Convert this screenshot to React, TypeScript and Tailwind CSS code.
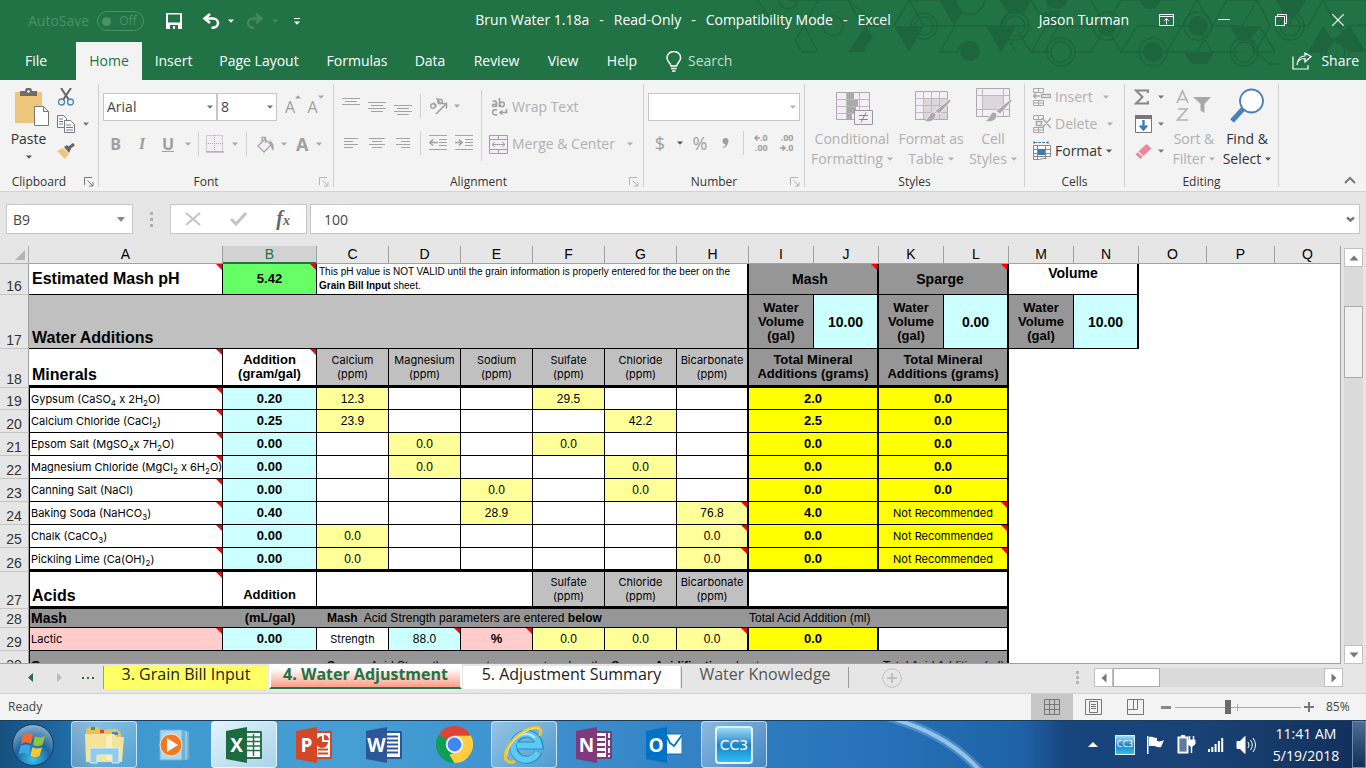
import type { ReactNode } from "react";
import clsx from "clsx";
import { twMerge } from "tailwind-merge";

/* ---------- small shared pieces ---------- */

const Caret = ({ className = "text-[#a8a8a8]" }: { className?: string }) => (
  <svg width="6" height="4" viewBox="0 0 6 4" className={clsx("shrink-0", className)}>
    <path d="M0 0.5h6L3 3.8z" fill="currentColor" />
  </svg>
);

const Launcher = ({ className }: { className: string }) => (
  <button aria-label="More options" className={clsx("absolute", className)}>
    <svg width="10" height="10" viewBox="0 0 10 10" fill="none" stroke="currentColor">
      <path d="M0.5 8V0.5H8M3.5 3.5l5 5M9 5v4H5" />
    </svg>
  </button>
);

const VLine = ({ className = "h-6" }: { className?: string }) => (
  <span className={clsx("w-px shrink-0 bg-[#d0d0d0]", className)} />
);

const IconButton = ({ label, className, children }: { label: string; className?: string; children: ReactNode }) => (
  <button aria-label={label} className={clsx("flex shrink-0 items-center justify-center", className)}>
    {children}
  </button>
);

/* ---------- title bar ---------- */

const TitlePattern = () => (
  <svg className="absolute right-0 top-0" width="620" height="68" viewBox="746 0 620 68" fill="none" stroke="#1d653d" strokeWidth="1.4">
    <path d="M758 0l16 26M788 0h60l30 26h-16M818 0l-14 26-9 14 7 12h16l-13-25M848 0l14 26M894 26l15-26 15 26M909 0h52M925 26l30 0-15-26M955 26l-15 26h17l5-9M955 26h46l15-26M955 26l-15-26M1001 26l15 26M1031 26h-40M1031 0l15 26-14 26h20M1046 26h60l15 26h30M1031 52l-14-22" />
    <path d="M1046 0l12 26-13 26M1075 52h16l15-26 15-26h54M1091 0l15 26M1121 52l16-26h60l15 26h30M1167 52l15-26M1152 52l15 0M1182 26l15-26 15 26-15 26h-30M1212 26l15-26h30l-15 26h-30M1242 26l15 26h18M1257 0l13 26-15 26 15 12h10M1288 26h20l15-26h43M1303 0l-15 26M1323 0l14 26 29-1M1275 52l-15-26M1308 52h20M1337 26l29 26" />
    <g fill="#1d653d" stroke="none">
      <path d="M866 26l7 12-6 6-3 8h-16zM894 26h30l-15 26zM986 26h30l-15 26zM940 0h16l8 10-9 14zM1000 0h31l-8 14h-15zM1230 26h31l-12 15h-10zM1184 52h30l-7 12h-16zM1276 0h30l-9 15h-12zM1323 26l-15 26h18l8-10zM1350 26l-16 13 16 13h16zM1046 26l-8-12 20-4 4 10z" />
      <circle cx="970" cy="51" r="10" />
      <circle cx="1153" cy="52" r="10" />
      <circle cx="1198" cy="26" r="10" />
      <circle cx="1107" cy="27" r="9" />
      <path d="M1047 0a10 9 0 0 0 20 0zM1140 0a10 9 0 0 0 20 0z" />
    </g>
    <circle cx="788" cy="0" r="9" />
    <circle cx="833" cy="26" r="10" />
    <circle cx="924" cy="26" r="9" />
    <circle cx="924" cy="26" r="13" />
    <circle cx="970" cy="0" r="14" fill="#217346" />
    <circle cx="1015" cy="26" r="10" />
    <circle cx="1015" cy="26" r="14" />
    <circle cx="1061" cy="52" r="10" />
    <circle cx="1061" cy="52" r="14" />
    <circle cx="1198" cy="26" r="14" />
    <circle cx="1107" cy="26" r="14" />
    <circle cx="1153" cy="52" r="14" />
    <circle cx="1244" cy="52" r="10" />
    <circle cx="1244" cy="52" r="14" />
    <circle cx="1290" cy="26" r="10" />
    <circle cx="1290" cy="26" r="14" />
    <circle cx="1335" cy="52" r="10" />
    <circle cx="1335" cy="52" r="14" />
  </svg>
);

const TitleBar = () => (
  <div className="relative flex h-[42px] items-center text-sm text-white">
    <div className="flex flex-1 items-center px-[22px]">
      <span className="ml-[6px] text-[#4c9168]">AutoSave</span>
      <button className="ml-2 flex h-5 w-[47px] items-center rounded-full border border-[#4c9168] pl-1 text-xs text-[#4c9168]">
        <span className="h-[9px] w-[9px] rounded-full bg-[#4c9168]" />
        <span className="ml-2">Off</span>
      </button>
      <IconButton label="Save" className="ml-[22px]">
        <svg width="16" height="16" viewBox="0 0 16 16">
          <path d="M0 0h16v16H0z" fill="#fff" />
          <path d="M2 1.5h12v8H2zM4 12h8v4H4z" fill="#217346" />
          <path d="M7 13h2v3H7z" fill="#fff" />
        </svg>
      </IconButton>
      <IconButton label="Undo" className="ml-5 gap-2">
        <svg width="18" height="16" viewBox="0 0 18 16" fill="none" stroke="#fff" strokeWidth="2.6">
          <path d="M8 1L2.5 5.5 8 10M3 5.5h8a5 4.6 0 0 1 0 9.2H9.5" />
        </svg>
        <Caret className="text-white" />
      </IconButton>
      <IconButton label="Redo" className="ml-3 gap-2">
        <svg width="18" height="16" viewBox="0 0 18 16" fill="none" stroke="#43895f" strokeWidth="2.4">
          <path d="M10 1l5.5 4.5L10 10M15 5.5H7a5 4.6 0 0 0 0 9.2h1" />
        </svg>
        <Caret className="text-[#43895f]" />
      </IconButton>
      <IconButton label="Customize Quick Access Toolbar" className="ml-4 flex-col gap-[2px]">
        <span className="h-px w-[6px] bg-white" />
        <Caret className="text-white" />
      </IconButton>
    </div>
    <h1 className="relative z-10 flex gap-[10px] pb-[2px]">
      <span>Brun Water 1.18a</span>
      <span>-</span>
      <span>Read-Only</span>
      <span>-</span>
      <span>Compatibility Mode</span>
      <span>-</span>
      <span>Excel</span>
    </h1>
    <div className="relative z-10 flex flex-1 items-center justify-end px-[22px] pb-[3px]">
      <span>Jason Turman</span>
      <IconButton label="Ribbon Display Options" className="ml-[30px]">
        <svg width="15" height="12" viewBox="0 0 15 12" fill="none" stroke="#fff">
          <path d="M0.5 0.5h14v11H0.5zM0.5 2.5h14M7.5 10.5v-6M5 7l2.5-2.5L10 7" />
        </svg>
      </IconButton>
      <IconButton label="Minimize" className="ml-[44px]">
        <svg width="12" height="12" viewBox="0 0 12 12" stroke="#fff">
          <path d="M0 5.5h12" />
        </svg>
      </IconButton>
      <IconButton label="Restore" className="ml-[45px]">
        <svg width="12" height="12" viewBox="0 0 12 12" fill="none" stroke="#fff">
          <path d="M0.5 2.5h9v9h-9zM2.5 2.5v-2h9v9h-2" />
        </svg>
      </IconButton>
      <IconButton label="Close" className="ml-[45px]">
        <svg width="12" height="12" viewBox="0 0 12 12" stroke="#fff" strokeWidth="1.2">
          <path d="M0 0l12 12M12 0L0 12" />
        </svg>
      </IconButton>
    </div>
  </div>
);

const menuTabs = [
  { label: "File", className: "w-[76px] pr-1" },
  { label: "Home", className: "w-[66px] bg-[#f3f3f3] text-[#217346]" },
  { label: "Insert", className: "w-[63px]" },
  { label: "Page Layout", className: "w-[108px]" },
  { label: "Formulas", className: "w-[88px]" },
  { label: "Data", className: "w-[58px]" },
  { label: "Review", className: "w-[75px]" },
  { label: "View", className: "w-[58px]" },
  { label: "Help", className: "w-[60px]" },
];

const MenuBar = () => (
  <nav className="relative flex h-[38px] items-stretch text-sm text-white">
    {menuTabs.map((tab) => (
      <button key={tab.label} className={clsx("shrink-0 text-center", tab.className)}>
        {tab.label}
      </button>
    ))}
    <button className="ml-[14px] flex items-center gap-[6px] text-[#c5dccf]">
      <svg width="16" height="21" viewBox="0 0 16 21" fill="none" stroke="#fff" strokeWidth="1.5">
        <path d="M5 15c0-3-4-4-4-8.3a6.7 6.2 0 0 1 13.6 0c0 4.3-4 5.3-4 8.3zM5 17.5h5.600M6 20h3.6" />
      </svg>
      Search
    </button>
    <button className="ml-auto flex items-center gap-2 pr-[7px]">
      <svg width="21" height="18" viewBox="0 0 21 18" fill="none" stroke="#fff" strokeWidth="1.2">
        <path d="M1 4.5v12.5h15v-4M5 13c.5-4 3-6.5 8-6.5V10l6-5.500L13 1v3C8 4 5.5 8 5 13z" />
      </svg>
      Share
    </button>
  </nav>
);

/* ---------- ribbon ---------- */

const Group = ({ label, className, children, launcher }: { label: string; className: string; children: ReactNode; launcher?: ReactNode }) => (
  <section className="flex shrink-0">
    <div className={clsx("flex flex-col", className)}>
      <div className="h-[92px]">{children}</div>
      <div className={clsx("relative flex h-[19px] items-center justify-center text-xs text-[#333]", launcher && "pr-5")}>
        {label}
        {launcher}
      </div>
    </div>
    <VLine className="mt-1 h-[103px]" />
  </section>
);

const Clipboard = () => (
  <Group label="Clipboard" className="w-[98px]" launcher={<Launcher className="right-1 text-[#777]" />}>
    <div className="flex pt-2">
      <button className="flex w-[57px] flex-col items-center text-sm leading-5 text-[#333]">
        <svg width="34" height="38" viewBox="0 0 34 38" className="ml-[6px]">
          <path d="M0 4h27v31H0z" fill="#ecc67b" />
          <path d="M5 3h5a3.5 3.5 0 0 1 7 0h5v5H5z" fill="#6d6d6d" />
          <circle cx="13.5" cy="3.5" r="1.3" fill="#f3f3f3" />
          <path d="M19.5 18.5h9l5 5v14h-14z" fill="#fff" stroke="#777" />
          <path d="M28.5 18.5v5h5" fill="none" stroke="#777" />
        </svg>
        <span className="mt-[3px]">Paste</span>
        <span className="flex h-4 items-center"><Caret className="text-[#555]" /></span>
      </button>
      <div className="flex flex-col gap-[9px]">
        <IconButton label="Cut" className="h-[18px] w-[18px]">
          <svg width="16" height="18" viewBox="0 0 16 18" fill="none">
            <path d="M3 0l8 12M13 0L5 12" stroke="#666" strokeWidth="2" />
            <circle cx="3.5" cy="14" r="3" stroke="#4a80b5" strokeWidth="1.3" />
            <circle cx="12.5" cy="14" r="3" stroke="#4a80b5" strokeWidth="1.3" />
          </svg>
        </IconButton>
        <IconButton label="Copy" className="h-[18px] gap-2">
          <svg width="18" height="18" viewBox="0 0 18 18" fill="#fff" stroke="#777">
            <path d="M0.5 0.5h6l3 3v9h-9z" />
            <path d="M2 4h4M2 6.5h4M2 9h4" stroke="#4a80b5" />
            <path d="M7.5 5.5h6l4 4v8h-10z" />
            <path d="M9 10h5M9 12.5h7M9 15h7" stroke="#4a80b5" />
          </svg>
          <Caret className="text-[#777]" />
        </IconButton>
        <IconButton label="Format Painter" className="h-[18px] w-[18px]">
          <svg width="18" height="16" viewBox="0 0 18 16">
            <path d="M0 8l6-3 6 6-4 5z" fill="#ecc67b" />
            <path d="M7 4l3-2 4 4-2 4z" fill="#666" />
            <path d="M12 5l5-4" stroke="#666" strokeWidth="3" />
          </svg>
        </IconButton>
      </div>
    </div>
  </Group>
);

const Combo = ({ label, value, className, caret }: { label: string; value: string; className: string; caret?: string }) => (
  <div className={clsx("relative flex shrink-0 items-center", className)}>
    <select aria-label={label} className="h-7 w-full appearance-none border border-[#c6c6c6] bg-white pl-[3px] text-sm text-[#444] outline-none">
      <option>{value}</option>
    </select>
    <Caret className={clsx("pointer-events-none absolute right-1", caret ?? "text-[#777]")} />
  </div>
);

const FontGroup = () => (
  <Group label="Font" className="w-[234px] px-1" launcher={<Launcher className="right-0 text-[#b5b5b5]" />}>
    <div className="flex items-center pt-[13px]">
      <Combo label="Font" value="Arial" className="w-[114px]" />
      <Combo label="Font size" value="8" className="w-[60px]" />
      <button aria-label="Increase font size" className="ml-2 flex w-6 text-base text-[#a0a0a0]">A<Caret className="rotate-180" /></button>
      <button aria-label="Decrease font size" className="ml-px flex w-6 text-base text-[#a0a0a0]">A<Caret /></button>
    </div>
    <div className="flex items-center pt-[11px] font-bold text-[#a0a0a0]">
      <IconButton label="Bold" className="w-[25px]">B</IconButton>
      <IconButton label="Italic" className="w-[28px] font-serif italic">I</IconButton>
      <IconButton label="Underline" className="w-6 underline">U</IconButton>
      <IconButton label="Underline styles" className="w-[15px]"><Caret /></IconButton>
      <VLine className="mx-[3px] h-6" />
      <IconButton label="Borders" className="ml-1 gap-2">
        <svg width="18" height="18" viewBox="0 0 18 18" fill="#f6eef6" stroke="#aaa" strokeDasharray="1 1">
          <path d="M0.5 0.5h16v16h-16zM8.5 0v16M0 8.5h17" />
          <path d="M0 17h18" strokeDasharray="none" stroke="#999" />
        </svg>
        <Caret />
      </IconButton>
      <VLine className="ml-2 h-6" />
      <IconButton label="Fill Color" className="ml-[10px] gap-[7px]">
        <svg width="17" height="17" viewBox="0 0 17 17" fill="#f6eef6" stroke="#a8a8a8" strokeWidth="1.3">
          <path d="M1 10l7-7 6 6-7 7zM5 7V1.500h3.5V7" />
          <path d="M13 5l3 4v5l-2-5z" fill="#a0a0a0" />
        </svg>
        <Caret />
      </IconButton>
      <IconButton label="Font Color" className="ml-[9px] gap-2 text-lg leading-6">A<Caret /></IconButton>
    </div>
  </Group>
);

/* Horizontal strokes for the paragraph and alignment buttons: [x, y, width] */
const Lines = ({ lines }: { lines: number[][] }) => (
  <svg width="18" height="18" viewBox="0 0 18 18" fill="#a3a3a3">
    {lines.map(([x, y, w]) => (
      <rect key={`${x}-${y}`} x={x} y={y} width={w} height="1" />
    ))}
  </svg>
);

const verticalAlign = [
  { label: "Top Align", lines: [[0, 1, 18], [3, 4, 12], [0, 7, 18]] },
  { label: "Middle Align", lines: [[0, 5, 18], [3, 8, 12], [0, 11, 18], [3, 14, 12]] },
  { label: "Bottom Align", lines: [[0, 8, 18], [3, 11, 12], [0, 14, 18], [3, 17, 12]] },
];

const horizontalAlign = [
  { label: "Align Left", lines: [[2, 4, 14], [2, 7, 9], [2, 10, 14], [2, 13, 9]] },
  { label: "Center", lines: [[1, 4, 16], [4, 7, 10], [1, 10, 16], [4, 13, 10]] },
  { label: "Align Right", lines: [[2, 4, 14], [7, 7, 9], [2, 10, 14], [7, 13, 9]] },
];

const Indent = ({ flip }: { flip?: boolean }) => (
  <svg width="18" height="18" viewBox="0 0 18 18" fill="none" stroke="#a3a3a3">
    <path d="M0 1.5h18M10 5.5h8M10 8.5h8M10 11.5h8M0 15.5h18" />
    <path d={flip ? "M0 8.5h7M4 5.5l3 3-3 3" : "M1 8.5h8M4 5.5l-3 3 3 3"} strokeWidth="1.7" />
  </svg>
);

const AlignmentGroup = () => (
  <Group label="Alignment" className="w-[309px]" launcher={<Launcher className="right-1 text-[#b5b5b5]" />}>
    <div className="flex pt-[10px]">
      <div className="flex flex-col gap-[19px] pl-2 pt-[7px]">
        <div className="flex items-center gap-2">
          {verticalAlign.map((a) => (
            <IconButton key={a.label} label={a.label}><Lines lines={a.lines} /></IconButton>
          ))}
          <VLine className="-my-1 h-6" />
          <IconButton label="Orientation" className="gap-[5px]">
            <svg width="20" height="18" viewBox="0 0 20 18" fill="none" stroke="#a0a0a0" strokeWidth="1.4">
              <circle cx="4" cy="9" r="2.3" />
              <path d="M4.5 5.500l3 4M7.500 1l4.500 6" />
              <circle cx="11" cy="4.500" r="2.300" />
              <path d="M7 17L17 7M12.500 6.500h5V11.500" strokeWidth="1.6" />
            </svg>
            <Caret />
          </IconButton>
        </div>
        <div className="flex items-center gap-2">
          {horizontalAlign.map((a) => (
            <IconButton key={a.label} label={a.label}><Lines lines={a.lines} /></IconButton>
          ))}
          <VLine className="-my-1 h-6" />
          <IconButton label="Decrease Indent"><Indent /></IconButton>
          <IconButton label="Increase Indent"><Indent flip /></IconButton>
        </div>
      </div>
      <VLine className="ml-2 h-[71px]" />
      <div className="flex flex-col gap-[17px] pl-[7px] pt-[7px] text-sm text-[#b0b0b0]">
        <button className="flex h-5 items-center gap-1">
          <svg width="19" height="18" viewBox="0 0 19 18" fill="none" stroke="#a0a0a0" strokeWidth="1.600">
            <path d="M3.500 3.500c2-1 4-.5 4 1.500v4M7.500 6C5 6 3.500 6.300 3.500 7.500s2.500 1.500 4 0M10.500 0v9" />
            <circle cx="13" cy="6.300" r="2.300" />
            <path d="M8 12c-2-1-4.500 0-4.500 2.300S6 17.500 8 16.500M17.500 11v3.500h-6M13.500 12.500l-2.500 2 2.500 2" />
          </svg>
          Wrap Text
        </button>
        <button className="flex h-5 items-center gap-1">
          <svg width="19" height="19" viewBox="0 0 19 19" fill="#f6eef6" stroke="#a0a0a0">
            <path d="M0.5 0.5h18v18h-18zM0.5 4.5h18M0.5 14.5h18M9.5 0v4M9.5 15v4M3 9.5h13M6 7L3 9.5 6 12M13 7l3 2.5-3 2.5" />
          </svg>
          Merge &amp; Center
          <Caret className="ml-2" />
        </button>
      </div>
    </div>
  </Group>
);

const NumberGroup = () => (
  <Group label="Number" className="w-40 px-1" launcher={<Launcher className="right-0 text-[#b5b5b5]" />}>
    <div className="pt-[13px]"><Combo label="Number format" value=" " className="w-[152px]" caret="text-[#b5b5b5]" /></div>
    <div className="flex items-center pt-[10px] text-lg leading-6 text-[#a0a0a0]">
      <IconButton label="Accounting format" className="h-6 w-6">$</IconButton>
      <IconButton label="Currency list" className="h-6 w-4"><Caret className="text-[#555]" /></IconButton>
      <IconButton label="Percent Style" className="h-6 w-6">%</IconButton>
      <IconButton label="Comma Style" className="h-6 w-[26px]">
        <svg width="7" height="10" viewBox="0 0 7 10" fill="currentColor"><path d="M3.500 0C6 0 7 1.800 6.300 4.500 5.700 7 4 9 1.500 10l-.5-1c1.500-.8 2.300-1.800 2.500-3C1.500 6.200.5 5 .5 3S1.800 0 3.500 0z" /></svg>
      </IconButton>
      <VLine className="ml-[5px] h-6" />
      <button aria-label="Increase Decimal" className="ml-[10px] flex flex-col items-end text-[9px] font-bold leading-[10px]">
        <span className="flex items-center">
          <svg width="6" height="6" viewBox="0 0 6 6" fill="none" stroke="currentColor" strokeWidth="1.500"><path d="M6 3H1M3.500 0.500L1 3l2.500 2.500" /></svg>
          .0
        </span>
        <span>.00</span>
      </button>
      <button aria-label="Decrease Decimal" className="ml-3 flex flex-col items-end text-[9px] font-bold leading-[10px]">
        <span>.00</span>
        <span className="flex items-center">
          <svg width="6" height="6" viewBox="0 0 6 6" fill="none" stroke="currentColor" strokeWidth="1.500"><path d="M0 3h5M2.500 0.500L5 3 2.500 5.500" /></svg>
          .0
        </span>
      </button>
    </div>
  </Group>
);

const Brush = () => (
  <path d="M37 13l-12 13-4-3L36 11zM22 26l-3-2c-4 0-3 6-9 9 5 2 12 0 12-7z" fill="#aaa" stroke="#f3f3f3" strokeWidth="0.8" />
);

const BigButton = ({ top, bottom, className, children, caret }: { top: string; bottom: string; className: string; children: ReactNode; caret?: string }) => (
  <button className={clsx("flex shrink-0 flex-col items-center text-sm leading-5", className)}>
    {children}
    <span className="mt-[3px]">{top}</span>
    <span className="flex items-center gap-1">{bottom}<Caret className={caret ?? "text-[#b0b0b0]"} /></span>
  </button>
);

const StylesGroup = () => (
  <Group label="Styles" className="w-[219px]">
    <div className="flex pl-1 pt-2 text-[#b0b0b0]">
      <BigButton top="Conditional" bottom="Formatting" className="w-[86px]">
        <svg width="38" height="38" viewBox="0 0 38 38" className="ml-1">
          <path d="M1.5 4.5h33v27h-33z" fill="#f6eef6" stroke="#aaa" />
          <path d="M12 5h7v6h-7zM12 11h11v7H12zM12 18h9v7h-9zM12 25h5v6h-5z" fill="#aaa" />
          <path d="M1 11.5h33M1 18.5h33M1 25.5h33M11.5 5v26M24.5 5v26" stroke="#bbb" />
          <path d="M19.5 22.5h18v14h-18z" fill="#f6eef6" stroke="#999" />
          <path d="M24 27.5h9M24 31.5h9M31 24.5l-5 10" stroke="#888" />
        </svg>
      </BigButton>
      <BigButton top="Format as" bottom="Table" className="w-[72px]">
        <svg width="38" height="38" viewBox="0 0 38 38" className="ml-1">
          <path d="M1.5 3.5h32v28h-32z" fill="#f6eef6" stroke="#aaa" />
          <path d="M9 11h24v20H9z" fill="#ddd6dd" />
          <path d="M1 10.5h33M1 17.5h33M1 24.5h33M9.5 3v28M17.5 3v28M25.5 3v28" stroke="#bbb" />
          <Brush />
        </svg>
      </BigButton>
      <BigButton top="Cell" bottom="Styles" className="w-[52px]">
        <svg width="40" height="38" viewBox="0 0 40 38" className="ml-1">
          <path d="M1.5 0.5h33v28h-33z" fill="#f6eef6" stroke="#aaa" />
          <path d="M8 8h20v13H8z" fill="#ddd6dd" />
          <path d="M1 7.5h33M1 21.5h33M7.5 0v28M28.5 0v28" stroke="#bbb" />
          <Brush />
        </svg>
      </BigButton>
    </div>
  </Group>
);

const RowsIcon = ({ extra }: { extra: ReactNode }) => (
  <svg width="18" height="18" viewBox="0 0 18 18" fill="none" stroke="#a8a8a8">
    <path d="M0.5 0.5h10v4h-10zM0.5 12.5h10v5h-10zM5.5 0v4M5.5 12v6M0 15h10" />
    {extra}
  </svg>
);

const CellsGroup = () => (
  <Group label="Cells" className="w-[99px]">
    <div className="flex flex-col gap-[9px] pl-2 pt-2 text-sm leading-[18px] text-[#b0b0b0]">
      <button className="flex h-[18px] items-center gap-1">
        <RowsIcon extra={<path d="M8.5 6.5h9v3h-9zM0 8h7M3 5.5L0.5 8 3 10.5" strokeWidth="1.4" />} />
        Insert<Caret className="ml-[6px]" />
      </button>
      <button className="flex h-[18px] items-center gap-1">
        <RowsIcon extra={<path d="M3.5 6.5h5v4h-5zM9 3l9 10M18 3L9 13" strokeWidth="1.5" />} />
        Delete<Caret className="ml-[6px]" />
      </button>
      <button className="flex h-[18px] items-center gap-1 text-[#333]">
        <svg width="18" height="20" viewBox="0 0 18 20" fill="#fff" stroke="#888">
          <path d="M0.5 4.5h17v11h-17zM0.5 15.5v3h6l3-1h4M0 8.5h17M0 12.5h17M4.5 5v13M12.5 5v13" />
          <path d="M5 8h7v6H5z" fill="#3d7ab8" stroke="none" />
          <path d="M1 1.5h14M1 0v3M15 0v3" stroke="#3d7ab8" strokeDasharray="3 1" />
        </svg>
        Format<Caret className="text-[#555]" />
      </button>
    </div>
  </Group>
);

const EditingGroup = () => (
  <Group label="Editing" className="w-[153px]">
    <div className="flex pl-2 pt-2 text-[#b0b0b0]">
      <div className="flex w-8 flex-col gap-[9px]">
        <IconButton label="AutoSum" className="h-[18px] gap-2">
          <svg width="16" height="16" viewBox="0 0 16 16" fill="none" stroke="#888" strokeWidth="2"><path d="M14 4V1.500H2L8.500 8 2 14.500h12V12" /></svg>
          <Caret className="text-[#777]" />
        </IconButton>
        <IconButton label="Fill" className="h-[18px] gap-[6px]">
          <svg width="17" height="18" viewBox="0 0 17 18">
            <path d="M0.5 0.5h16v17h-16z" fill="#fff" stroke="#777" />
            <path d="M0 0h17v4H0z" fill="#777" />
            <path d="M8.5 5v9M5 10.5l3.5 4 3.5-4" fill="none" stroke="#3d7ab8" strokeWidth="2.4" />
          </svg>
          <Caret className="text-[#777]" />
        </IconButton>
        <IconButton label="Clear" className="h-[18px] gap-[6px]">
          <svg width="17" height="17" viewBox="0 0 17 17"><path d="M11.500 1l5 4.500-8 7.500-5-4.500z" fill="#e8899c" /><path d="M2.700 9.300l5 4.500L5.500 16l-5-4.500z" fill="#e8899c" /></svg>
          <Caret className="text-[#777]" />
        </IconButton>
      </div>
      <BigButton top="Sort &amp;" bottom="Filter" className="ml-1 w-[50px]">
        <svg width="38" height="38" viewBox="0 0 38 38" fill="none" stroke="#b3b3b3" strokeWidth="1.7">
          <path d="M2 15L7.5 3 13 15M4 11.5h7M3 21h9L2.5 32H13" />
          <path d="M18 9h18l-6.5 7v9l-4-2.5V16z" fill="#a8a8a8" stroke="none" />
        </svg>
      </BigButton>
      <BigButton top="Find &amp;" bottom="Select" className="w-[56px] text-[#333]" caret="text-[#555]">
        <svg width="36" height="38" viewBox="0 0 36 38">
          <path d="M14 21L3 33" stroke="#4a80ba" strokeWidth="5" />
          <circle cx="22.5" cy="13" r="11.5" fill="#fff" stroke="#4a80ba" strokeWidth="1.8" />
        </svg>
      </BigButton>
    </div>
  </Group>
);

const Ribbon = () => (
  <div className="relative flex h-28 shrink-0 border-b border-[#d2d2d2] bg-[#f3f3f3]">
    <Clipboard />
    <FontGroup />
    <AlignmentGroup />
    <NumberGroup />
    <StylesGroup />
    <CellsGroup />
    <EditingGroup />
    <button aria-label="Collapse the Ribbon" className="mb-[7px] ml-auto mr-[10px] self-end">
      <svg width="12" height="8" viewBox="0 0 12 8" fill="none" stroke="#777" strokeWidth="2"><path d="M1 7l5-5 5 5" /></svg>
    </button>
  </div>
);

/* ---------- formula bar ---------- */

const FormulaBar = () => (
  <div className="flex h-[54px] shrink-0 items-start px-[6px] pt-3 text-sm text-[#444]">
    <div className="relative flex w-[127px] items-center">
      <input aria-label="Name Box" defaultValue="B9" className="h-[30px] w-full border border-[#c6c6c6] bg-white pl-[6px] outline-none" />
      <svg width="8" height="5" viewBox="0 0 8 5" className="pointer-events-none absolute right-2"><path d="M0 0h8L4 5z" fill="#888" /></svg>
    </div>
    <span className="flex h-[30px] w-[37px] flex-col items-center justify-center gap-[3px]">
      <i className="h-[3px] w-[3px] bg-[#b0b0b0]" />
      <i className="h-[3px] w-[3px] bg-[#b0b0b0]" />
      <i className="h-[3px] w-[3px] bg-[#b0b0b0]" />
    </span>
    <div className="flex h-[30px] w-[137px] items-center justify-between border border-[#c6c6c6] bg-white pl-[14px] pr-4">
      <IconButton label="Cancel"><svg width="16" height="14" viewBox="0 0 16 14" stroke="#c4c4c4" strokeWidth="2"><path d="M1 1l14 12M15 1L1 13" /></svg></IconButton>
      <IconButton label="Enter"><svg width="17" height="14" viewBox="0 0 17 14" fill="none" stroke="#c4c4c4" strokeWidth="3"><path d="M1 7l5 5L16 1" /></svg></IconButton>
      <button aria-label="Insert Function" className="font-['Liberation_Serif',serif] text-xl font-bold italic leading-5 text-[#666]">f<span className="text-sm">x</span></button>
    </div>
    <div className="relative ml-[3px] flex min-w-0 flex-1 items-center">
      <input aria-label="Formula Bar" defaultValue="100" className="h-[30px] w-full border border-[#c6c6c6] bg-white pl-[13px] outline-none" />
      <svg width="9" height="7" viewBox="0 0 9 7" className="pointer-events-none absolute right-[5px]" fill="none" stroke="#777" strokeWidth="2.5"><path d="M1 1.500l3.500 3 3.500-3" /></svg>
    </div>
  </div>
);

/* ---------- worksheet ---------- */

type Cell = { text?: ReactNode; span?: number; className?: string; note?: boolean };
type Row = { n: number; height: string; cells: Cell[] };

const dark = "bg-[#969696]";
const silver = "bg-[#c0c0c0]";
const cyan = "bg-[#ccffff]";
const cream = "bg-[#ffff99]";
const yellow = "bg-[#ffff00]";
const bold = "text-[13px] leading-[14px] font-bold";
const heading = "text-left align-bottom text-base leading-5 font-bold";
const label = "font-['Inter',sans-serif] text-[11px] leading-[14px]";
const none = "border-0";

const sub = (n: number) => <span className="relative top-[3px] text-[8px] leading-none">{n}</span>;

const head = (name: string, className = ""): Cell => ({ text: <>{name}<br />(ppm)</>, className: twMerge(silver, label, className) });

// a mineral line: values for C..H, then the mash and sparge totals
const mineral = (n: number, name: ReactNode, add: string, values: string[], mash: string, sparge: string, last = false): Row => {
  const end = last ? "border-b-[3px]" : "";
  const noSparge = sparge.startsWith("Not");
  return {
    n,
    height: last ? "h-6" : n === 19 ? "h-[22px]" : "h-[23px]",
    cells: [
      { text: name, note: true, className: clsx(label, "border-l text-left pl-px", end) },
      { text: add, className: clsx(cyan, bold, end) },
      ...values.map((v, i) => ({
        text: v,
        note: i === 5 && v !== "",
        className: clsx(v && cream, i === 5 && "border-r-2", end),
      })),
      { text: mash, span: 2, className: clsx(yellow, bold, "border-r-2", end) },
      { text: sparge, span: 2, note: noSparge, className: clsx(yellow, noSparge ? label : bold, "border-r-2", end) },
      { span: 5, className: none },
    ],
  };
};

const volume = <>Water<br />Volume<br />(gal)</>;

const rows: Row[] = [
  {
    n: 16,
    height: "h-[31px]",
    cells: [
      { text: "Estimated Mash pH", note: true, className: "text-left pl-[3px] text-base font-bold" },
      { text: "5.42", note: true, className: clsx("bg-[#66ff66]", bold) },
      { text: <>This pH value is NOT VALID until the grain information is properly entered for the beer on the<br /><b>Grain Bill Input</b> sheet.</>, span: 6, className: "border-r-2 pl-[2px] text-left text-[10px] leading-[14px]" },
      { text: "Mash", span: 2, note: true, className: clsx(dark, "border-r-2 pr-[6px] text-sm font-bold") },
      { text: "Sparge", span: 2, note: true, className: clsx(dark, "border-r-2 pr-[6px] text-sm font-bold") },
      { text: "Volume", span: 2, className: "border-r-2 align-top pt-[2px] text-sm leading-[14px] font-bold" },
      { span: 3, className: none },
    ],
  },
  {
    n: 17,
    height: "h-[54px]",
    cells: [
      { text: "Water Additions", span: 8, className: clsx(silver, heading, "border-r-2 pl-[3px]") },
      { text: volume, className: clsx(dark, bold) },
      { text: "10.00", className: clsx(cyan, "border-r-2 text-sm font-bold") },
      { text: volume, className: clsx(dark, bold) },
      { text: "0.00", className: clsx(cyan, "border-r-2 text-sm font-bold") },
      { text: volume, className: clsx(dark, bold) },
      { text: "10.00", className: clsx(cyan, "border-r-2 text-sm font-bold") },
      { span: 3, className: none },
    ],
  },
  {
    n: 18,
    height: "h-[39px]",
    cells: [
      { text: "Minerals", note: true, className: clsx(heading, "border-b-[3px] pl-[3px]") },
      { text: <>Addition<br />(gram/gal)</>, note: true, className: clsx(bold, "border-b-[3px]") },
      ...["Calcium", "Magnesium", "Sodium", "Sulfate", "Chloride"].map((name) => head(name, "border-b-[3px]")),
      head("Bicarbonate", "border-b-[3px] border-r-2"),
      { text: <>Total Mineral<br />Additions (grams)</>, span: 2, className: clsx(dark, bold, "border-b-[3px] border-r-2") },
      { text: <>Total Mineral<br />Additions (grams)</>, span: 2, className: clsx(dark, bold, "border-b-[3px] border-r-2") },
      { span: 5, className: none },
    ],
  },
  mineral(19, <>Gypsum (CaSO{sub(4)} x 2H{sub(2)}O)</>, "0.20", ["12.3", "", "", "29.5", "", ""], "2.0", "0.0"),
  mineral(20, <>Calcium Chloride (CaCl{sub(2)})</>, "0.25", ["23.9", "", "", "", "42.2", ""], "2.5", "0.0"),
  mineral(21, <>Epsom Salt (MgSO{sub(4)}x 7H{sub(2)}O)</>, "0.00", ["", "0.0", "", "0.0", "", ""], "0.0", "0.0"),
  mineral(22, <>Magnesium Chloride (MgCl{sub(2)} x 6H{sub(2)}O)</>, "0.00", ["", "0.0", "", "", "0.0", ""], "0.0", "0.0"),
  mineral(23, "Canning Salt (NaCl)", "0.00", ["", "", "0.0", "", "0.0", ""], "0.0", "0.0"),
  mineral(24, <>Baking Soda (NaHCO{sub(3)})</>, "0.40", ["", "", "28.9", "", "", "76.8"], "4.0", "Not Recommended"),
  mineral(25, <>Chalk (CaCO{sub(3)})</>, "0.00", ["0.0", "", "", "", "", "0.0"], "0.0", "Not Recommended"),
  mineral(26, <>Pickling Lime (Ca(OH){sub(2)})</>, "0.00", ["0.0", "", "", "", "", "0.0"], "0.0", "Not Recommended", true),
  {
    n: 27,
    height: "h-[37px]",
    cells: [
      { text: "Acids", note: true, className: clsx(heading, "border-b-[3px] border-l pl-[2px]") },
      { text: "Addition", className: clsx(bold, "border-b-[3px] align-bottom pb-1") },
      { span: 3, className: "border-b-[3px]" },
      head("Sulfate", "border-b-[3px]"),
      head("Chloride", "border-b-[3px]"),
      head("Bicarbonate", "border-b-[3px] border-r-2"),
      { span: 4, className: "border-b-[3px] border-r-2" },
      { span: 5, className: none },
    ],
  },
  {
    n: 28,
    height: "h-[19px]",
    cells: [
      { text: "Mash", className: clsx(dark, "border-l border-r-0 pl-px text-left text-sm leading-4 font-bold") },
      { text: "(mL/gal)", className: clsx(dark, bold, "border-r-0") },
      { text: <><b>Mash</b>&nbsp; Acid Strength parameters are entered <b>below</b></>, span: 6, className: clsx(dark, "border-r-0 pl-[10px] text-left") },
      { text: "Total Acid Addition (ml)", span: 4, className: clsx(dark, "border-r-2 text-left") },
      { span: 5, className: none },
    ],
  },
  {
    n: 29,
    height: "h-[23px]",
    cells: [
      { text: "Lactic", note: true, className: clsx(label, "border-l bg-[#ffcccc] pl-px text-left") },
      { text: "0.00", className: clsx(cyan, bold) },
      { text: "Strength", className: label },
      { text: "88.0", note: true, className: cyan },
      { text: "%", note: true, className: clsx("bg-[#ffcccc]", bold) },
      { text: "0.0", className: cream },
      { text: "0.0", className: cream },
      { text: "0.0", note: true, className: clsx(cream, "border-r-2") },
      { text: "0.0", span: 2, className: clsx(yellow, bold, "border-r-2") },
      { span: 2, className: "border-r-2" },
      { span: 5, className: none },
    ],
  },
  {
    n: 30,
    height: "h-[23px]",
    cells: [
      { text: "Sparge", className: clsx(dark, "border-l border-r-0 pl-px text-left align-bottom text-sm leading-[14px] font-bold") },
      { className: clsx(dark, "border-r-0") },
      { text: <><b>Sparge</b> Acid Strength parameters are entered on the <b>Sparge Acidification</b> sheet</>, span: 8, className: clsx(dark, "border-r-0 pl-[10px] text-left align-bottom") },
      { text: "Total Acid Addition (ml)", span: 2, className: clsx(dark, "border-r-2 pl-1 text-left align-bottom") },
      { span: 5, className: none },
    ],
  },
];

const columns = [
  { name: "A", className: "w-[194px]" },
  { name: "B", className: "w-[94px]" },
  ..."CDEFGH".split("").map((name) => ({ name, className: "w-[72px]" })),
  ..."IJKLMN".split("").map((name) => ({ name, className: "w-[65px]" })),
  { name: "O", className: "w-[68px]" },
  { name: "P", className: "w-[68px]" },
  { name: "Q", className: "" },
];

const Note = () => (
  <svg width="6" height="6" viewBox="0 0 6 6" className="absolute right-0 top-0">
    <path d="M0 0h6v6z" fill="#ff0000" />
  </svg>
);

const Sheet = () => (
  <table className="w-full table-fixed border-separate border-spacing-0 bg-white font-['Liberation_Sans',Arial,sans-serif] text-xs text-black">
    <colgroup>
      <col className="w-[29px]" />
      {columns.map((c) => <col key={c.name} className={c.className} />)}
    </colgroup>
    <thead>
      <tr className="h-[18px]">
        <th aria-label="Select all" className="border-b border-r border-[#b0b0b0] bg-[#e6e6e6] p-0">
          <svg width="10" height="10" viewBox="0 0 10 10" className="ml-auto mr-[3px]"><path d="M10 0v10H0z" fill="#b5b5b5" /></svg>
        </th>
        {columns.map((c) => (
          <th
            key={c.name}
            scope="col"
            className={twMerge(
              "border-b border-r border-[#a0a0a0] bg-[#e6e6e6] p-0 text-sm leading-[17px] font-normal last:border-r-0",
              c.name === "B" && "border-b-2 border-b-[#217346] bg-[#d2d2d2] leading-4 text-[#217346]",
            )}
          >
            {c.name}
          </th>
        ))}
      </tr>
    </thead>
    <tbody>
      {rows.map((row) => (
        <tr key={row.n} className={row.height}>
          <th scope="row" className="border-b border-r border-b-[#c4c4c4] border-r-[#a0a0a0] bg-[#e6e6e6] p-0 align-bottom text-sm leading-4 font-normal text-[#333]">{row.n}</th>
          {row.cells.map((cell, i) => (
            <td
              key={i}
              colSpan={cell.span}
              className={twMerge(
                "relative overflow-hidden whitespace-nowrap border-b border-r border-black p-0 text-center leading-[14px]",
                cell.className,
              )}
            >
              {cell.text}
              {cell.note && <Note />}
            </td>
          ))}
        </tr>
      ))}
    </tbody>
  </table>
);

const ScrollArrow = ({ label: name, d }: { label: string; d: string }) => (
  <button aria-label={name} className="flex h-[19px] w-[19px] shrink-0 items-center justify-center border border-[#c0c0c0] bg-white">
    <svg width="10" height="10" viewBox="0 0 10 10"><path d={d} fill="#777" /></svg>
  </button>
);

const Worksheet = () => (
  <main className="flex min-h-0 flex-1">
    <div className="min-w-0 flex-1 overflow-hidden border-b border-r border-[#a0a0a0] bg-white"><Sheet /></div>
    <div className="flex w-[25px] flex-col items-center pt-[2px]">
      <ScrollArrow label="Scroll up" d="M5 2.5l4.5 5h-9z" />
      <div className="w-[19px] flex-1 bg-[#dadada] pt-[39px]">
        <div className="h-[72px] border border-[#ababab] bg-[#f0f0f0]" />
      </div>
      <ScrollArrow label="Scroll down" d="M5 7.5l4.5-5h-9z" />
    </div>
  </main>
);

/* ---------- sheet tabs and status bar ---------- */

const SheetTabs = () => (
  <div className="flex h-[29px] shrink-0 items-start text-base leading-[18px] text-[#222]">
    <div className="flex h-[27px] w-[103px] items-center pl-7">
      <svg width="5" height="9" viewBox="0 0 5 9"><path d="M5 0v9L0 4.500z" fill="#217346" /></svg>
      <svg width="5" height="9" viewBox="0 0 5 9" className="ml-6"><path d="M0 0v9l5-4.500z" fill="#bbb" /></svg>
      <button aria-label="More sheets" className="ml-5 flex gap-[3px]">
        <i className="h-[2px] w-[2px] bg-[#217346]" />
        <i className="h-[2px] w-[2px] bg-[#217346]" />
        <i className="h-[2px] w-[2px] bg-[#217346]" />
      </button>
    </div>
    <button className="mt-[2px] h-[23px] w-[165px] border-l border-[#999] bg-[#ffff66] pb-[6px] leading-[17px]">3. Grain Bill Input</button>
    <button className="ml-px h-[25px] w-[193px] border-x-2 border-b-2 border-x-white border-b-[#217346] bg-linear-to-b from-white from-20% to-[#ff9c85] pb-1 font-bold text-[#217346]">4. Water Adjustment</button>
    <button className="ml-px mt-[2px] h-[23px] w-[217px] bg-white pb-[6px] leading-[17px]">5. Adjustment Summary</button>
    <span className="ml-px mt-[3px] h-[21px] w-px bg-[#999]" />
    <button className="h-[23px] w-[166px] pb-1 text-[#555]">Water Knowledge</button>
    <span className="mt-[3px] h-[21px] w-px bg-[#999]" />
    <IconButton label="New sheet" className="ml-[33px] mt-1">
      <svg width="20" height="20" viewBox="0 0 20 20" fill="none" stroke="#c0c0c0"><circle cx="10" cy="10" r="9.3" /><path d="M10 5v10M5 10h10" strokeWidth="2" /></svg>
    </IconButton>
    <div className="ml-auto mt-1 flex pr-[23px]">
      <span className="mr-[15px] flex flex-col justify-center gap-[2px]">
        <i className="h-[3px] w-[3px] bg-[#b5b5b5]" />
        <i className="h-[3px] w-[3px] bg-[#b5b5b5]" />
        <i className="h-[3px] w-[3px] bg-[#b5b5b5]" />
      </span>
      <ScrollArrow label="Scroll left" d="M2.5 5l5-4.500v9z" />
      <div className="flex w-[211px] bg-[#dadada]"><div className="h-[19px] w-[47px] border border-[#ababab] bg-white" /></div>
      <ScrollArrow label="Scroll right" d="M7.5 5l-5-4.500v9z" />
    </div>
  </div>
);

const StatusBar = () => (
  <div className="flex h-[27px] shrink-0 items-center border-t border-[#d0d0d0] bg-[#f3f3f3] pl-2 text-xs text-[#444]">
    <span>Ready</span>
    <div className="ml-auto flex h-full items-center">
      <IconButton label="Normal view" className="h-full w-[42px] bg-[#c6c6c6]">
        <svg width="16" height="16" viewBox="0 0 16 16" fill="none" stroke="#777"><path d="M0.5 0.5h15v15h-15zM0 5.5h16M0 10.5h16M5.5 0v16M10.5 0v16" /></svg>
      </IconButton>
      <IconButton label="Page Layout view" className="w-[41px]">
        <svg width="17" height="16" viewBox="0 0 17 16" fill="none" stroke="#777"><path d="M0.5 0.5h16v15h-16zM4.5 2.5h8v11h-8zM6 5.5h5M6 7.5h5M6 9.5h5" /></svg>
      </IconButton>
      <IconButton label="Page Break view" className="w-[43px]">
        <svg width="17" height="16" viewBox="0 0 17 16" fill="none" stroke="#777"><path d="M0.5 0.5h16v15h-16zM0.5 10.5h10M6.5 0v10M10.5 0v10" /></svg>
      </IconButton>
      <IconButton label="Zoom out" className="ml-1"><span className="h-[3px] w-[10px] bg-[#888]" /></IconButton>
      <div className="relative ml-1 flex items-center">
        <span className="absolute left-[62px] h-[7px] w-px bg-[#aaa]" />
        <input
          type="range"
          aria-label="Zoom"
          defaultValue={42}
          className="relative h-[15px] w-[126px] appearance-none bg-[linear-gradient(#aaa,#aaa)] bg-[length:100%_1px] bg-center bg-no-repeat [&::-webkit-slider-thumb]:h-[14px] [&::-webkit-slider-thumb]:w-[6px] [&::-webkit-slider-thumb]:appearance-none [&::-webkit-slider-thumb]:bg-[#6a6a6a]"
        />
      </div>
      <IconButton label="Zoom in" className="ml-[3px]">
        <svg width="10" height="10" viewBox="0 0 10 10" stroke="#777" strokeWidth="2"><path d="M5 0v10M0 5h10" /></svg>
      </IconButton>
      <span className="w-[52px] pl-3">85%</span>
    </div>
  </div>
);

/* ---------- taskbar ---------- */

const OfficeIcon = ({ letter, color, shade, children }: { letter: string; color: string; shade: string; children: ReactNode }) => (
  <svg width="36" height="36" viewBox="0 0 36 36">
    <path d="M19 4h16a1 1 0 0 1 1 1v26a1 1 0 0 1-1 1H19z" fill={color} />
    <path d="M20 6h14v24H20z" fill="#fff" />
    {children}
    <path d="M0 4l21-4v36L0 32z" fill={shade} />
    <text x="10.5" y="25" fontSize="19" fontWeight="bold" fill="#fff" textAnchor="middle" fontFamily="Open Sans">{letter}</text>
  </svg>
);

const ExplorerIcon = () => (
  <svg width="40" height="40" viewBox="0 0 40 40">
    <path d="M2 4l4-2h8l2 3h6l1-1h10l4 4v26H2z" fill="#e3c363" />
    <path d="M7 2h4v3H7z" fill="#3f9a4b" />
    <path d="M16 5h4v3h-4z" fill="#d04a35" />
    <path d="M28 7h6v3h-6z" fill="#3b86d1" />
    <path d="M1 9h29l3 3h7l-2 25H2z" fill="#f6e39a" />
    <path d="M22 12l6-3v26h-6z" fill="#fbf0bd" />
    <path d="M6 23h29v15H28v-8H13v8H6z" fill="#8fcdea" stroke="#d6f0fa" />
  </svg>
);

const MediaIcon = () => (
  <svg width="34" height="34" viewBox="0 0 34 34">
    <path d="M5 2h22l5 2v27l-6 1H5z" fill="#6fb2d8" />
    <path d="M29 3v29" stroke="#b8def0" />
    <path d="M3 2h22v30H3z" fill="#add7ed" stroke="#6fb2d8" />
    <circle cx="14" cy="17" r="11" fill="#f07a22" stroke="#fff" strokeWidth="0.8" />
    <path d="M10 10l11 7-11 7z" fill="#fff" />
  </svg>
);

const ChromeIcon = () => (
  <svg width="37" height="37" viewBox="0 0 36 36">
    <path d="M18 18L2.4 9A18 18 0 0 1 33.6 9z" fill="#db4437" />
    <path d="M18 18L33.6 9A18 18 0 0 1 18 36z" fill="#ffcd40" />
    <path d="M18 18v18A18 18 0 0 1 2.4 9z" fill="#0f9d58" />
    <path d="M18 9.5h15.8L26 22z" fill="#ffcd40" />
    <path d="M10 22.5L2.4 9l9 4z" fill="#0f9d58" />
    <path d="M26 22.5L18 36l-5-8z" fill="#ffcd40" />
    <circle cx="18" cy="18" r="8.5" fill="#f1f1f1" />
    <circle cx="18" cy="18" r="6.7" fill="#4285f4" />
  </svg>
);

const IeIcon = () => (
  <svg width="40" height="40" viewBox="0 0 40 40" fill="none">
    <path d="M34.5 27a13 13 0 1 1 1-6.500H13" stroke="#1f8fc9" strokeWidth="8" />
    <path d="M34 27a13 13 0 1 1 1-6.500H13" stroke="#5ccaf3" strokeWidth="6" />
    <path d="M14 12a12 12 0 0 1 17 1" stroke="#b7ecfc" strokeWidth="2" />
    <path d="M11 36.500C-1 40-2 29 8 17S34-2 36.500 5c.7 2 0 4-1 6" stroke="#f4c52b" strokeWidth="3" />
    <path d="M3 31C2 26 7 17 16 10S33 2 35.500 4.500" stroke="#fbe68a" strokeWidth="1" />
  </svg>
);

const StartOrb = () => (
  <svg width="44" height="44" viewBox="0 0 44 44">
    <defs>
      <radialGradient id="orb" cx="50%" cy="85%" r="85%"><stop offset="0" stopColor="#35c3ee" /><stop offset=".5" stopColor="#1e64a0" /><stop offset="1" stopColor="#8fb5cf" /></radialGradient>
    </defs>
    <circle cx="22" cy="22" r="20.5" fill="url(#orb)" stroke="#123a5f" />
    <path d="M12 12c4-2.5 7-2 10 0l-2 9c-3-2-6-2-10 0z" fill="#ef6a33" />
    <path d="M24 13c3 1.5 6 2 10 0l-2.5 9c-3.5 1.5-7 1.5-9.5-.5z" fill="#8cc63f" />
    <path d="M9.5 23c4-2 7-2 10 0l-2 8.5c-3-2-6-2-10 0z" fill="#41a5e0" />
    <path d="M21.5 24c3 2 6 2 9.5.5L28.5 33c-3 1.5-6 1.5-9-.5z" fill="#fcc72c" />
  </svg>
);

const Cc3Icon = ({ small }: { small?: boolean }) => (
  <span className={clsx(
    "flex items-center justify-center border-white/80 bg-linear-to-b from-[#9bdcf5] via-[#1583c9] to-[#34bdf0] font-['DejaVu_Sans',sans-serif] text-white",
    small ? "h-5 w-5 border text-[8px]" : "h-[38px] w-[38px] rounded border-2 text-sm",
  )}>CC3</span>
);

const OutlookIcon = () => (
  <svg width="36" height="36" viewBox="0 0 36 36">
    <path d="M19 7h17v20H19z" fill="#fff" stroke="#0072c6" />
    <path d="M20 8l4 8 4 3 8-11" fill="none" stroke="#0072c6" strokeWidth="1.8" />
    <path d="M0 4l21-4v36L0 32z" fill="#0072c6" />
    <text x="10" y="25" fontSize="19" fontWeight="bold" fill="#fff" textAnchor="middle" fontFamily="Open Sans">O</text>
  </svg>
);

const apps: { name: string; active?: boolean; bright?: boolean; icon: ReactNode }[] = [
  { name: "Windows Explorer", active: true, icon: <ExplorerIcon /> },
  { name: "Windows Media Player", icon: <MediaIcon /> },
  {
    name: "Excel",
    active: true,
    bright: true,
    icon: <OfficeIcon letter="X" color="#217346" shade="#1c6b40"><path d="M21 10h13M21 14.5h13M21 19h13M21 23.5h13M27.5 7v22" stroke="#217346" strokeWidth="1.5" /></OfficeIcon>,
  },
  {
    name: "PowerPoint",
    icon: <OfficeIcon letter="P" color="#d24726" shade="#d24726"><path d="M22 22.500h10M22 26.500h10" stroke="#d24726" strokeWidth="2" /><path d="M26 9v6h6a6 6 0 1 1-6-6z" fill="#d24726" /><path d="M28 7.500a6 6 0 0 1 5 5.500h-5z" fill="#d24726" /></OfficeIcon>,
  },
  {
    name: "Word",
    icon: <OfficeIcon letter="W" color="#2b579a" shade="#2b579a"><path d="M21 9.5h11M21 13.5h11M21 17.5h11M21 21.5h11M21 25.5h11" stroke="#2b579a" strokeWidth="2" /></OfficeIcon>,
  },
  { name: "Chrome", icon: <ChromeIcon /> },
  { name: "Internet Explorer", active: true, icon: <IeIcon /> },
  {
    name: "OneNote",
    icon: <OfficeIcon letter="N" color="#80397b" shade="#80397b"><path d="M21 10h8M21 15h8M21 20h8M21 25h8M31 5v26M31 12h4M31 20h4M31 27h4" stroke="#80397b" strokeWidth="2" /></OfficeIcon>,
  },
  { name: "Outlook", icon: <OutlookIcon /> },
  { name: "CC3", active: true, icon: <Cc3Icon /> },
];

const Taskbar = () => (
  <footer className="relative flex h-12 shrink-0 items-center overflow-hidden border-t border-[#1b3d5c] bg-[linear-gradient(90deg,#15507f_0%,#1f6ca5_5%,#3d98cf_7%,#459fd4_25%,#3d91cd_40%,#2f7cc0_55%,#2671b8_65%,#1f61a5_75%,#17457d_78%,#194275_88%,#122f5a_100%)] text-sm text-white">
    <svg className="absolute left-[64%] top-0" width="120" height="48" viewBox="0 0 120 48" fill="none">
      <path d="M0 -8C50 5 82 22 108 52" stroke="#8ec5f0" strokeWidth="9" opacity=".35" />
      <path d="M0 -8C50 5 82 22 108 52" stroke="#b4dbf8" strokeWidth="4" opacity=".7" />
    </svg>
    <IconButton label="Start" className="relative w-[66px]"><StartOrb /></IconButton>
    <div className="relative ml-[5px] flex h-full gap-1">
      {apps.map((app) => (
        <IconButton
          key={app.name}
          label={app.name}
          className={clsx(
            "h-[47px] w-[66px]",
            app.active && "rounded-sm border border-white/60",
            app.active && !app.bright && "bg-linear-to-br from-white/45 to-white/10",
            app.bright && "bg-linear-to-br from-[#e4f3fb] to-[#a8d3ea]",
          )}
        >
          {app.icon}
        </IconButton>
      ))}
    </div>
    <div className="relative ml-auto flex h-full items-center">
      <IconButton label="Show hidden icons" className="mr-[17px]"><svg width="10" height="5" viewBox="0 0 10 5"><path d="M0 5l5-5 5 5z" fill="#fff" /></svg></IconButton>
      <Cc3Icon small />
      <svg width="18" height="18" viewBox="0 0 18 18" className="ml-3" fill="#fff"><path d="M0 0h1.500v18H0zM2 1c4-1 5 1 8 1v3c3 1 5 0 7-1l-3 7c-3 1-5-1-7-1H2z" /></svg>
      <svg width="19" height="19" viewBox="0 0 19 19" className="ml-3" fill="none" stroke="#fff">
        <path d="M1.5 2.5h9v15h-9zM4 1h4" strokeWidth="2" />
        <path d="M3 4h6v12H3z" fill="#fff" opacity=".3" />
        <path d="M11 5h7v4l-2 2h-3l-2-2z" fill="#fff" />
        <path d="M12.5 1v4M16.5 1v4M14.5 11v7" strokeWidth="1.5" />
      </svg>
      <svg width="16" height="14" viewBox="0 0 16 14" className="ml-3" fill="#fff"><path d="M0 11h2v3H0zM3.300 9h2v5h-2zM6.600 6h2v8h-2zM9.900 3h2v11h-2zM13.200 0h2v14h-2z" /></svg>
      <svg width="20" height="18" viewBox="0 0 20 18" className="ml-3" fill="none" stroke="#fff"><path d="M1 5.5h3l5-5v17l-5-5H1z" fill="#fff" /><path d="M12 6q2 3 0 6M14.5 4q3.5 5 0 10M17 2q5 7 0 14" /></svg>
      <div className="w-24 pl-1 text-center leading-[22px]">
        <div>11:41 AM</div>
        <div>5/19/2018</div>
      </div>
      <button aria-label="Show desktop" className="h-full w-[14px] border border-[#6d8aa8] bg-linear-to-b from-[#4d6e92] to-[#122f5a]" />
    </div>
  </footer>
);

export default function App() {
  return (
    <div className="flex h-screen flex-col overflow-hidden bg-[#e6e6e6] font-['Open_Sans','Segoe_UI',sans-serif]">
      <header className="relative shrink-0 bg-[#217346]">
        <TitlePattern />
        <TitleBar />
        <MenuBar />
      </header>
      <Ribbon />
      <FormulaBar />
      <Worksheet />
      <SheetTabs />
      <StatusBar />
      <Taskbar />
    </div>
  );
}
